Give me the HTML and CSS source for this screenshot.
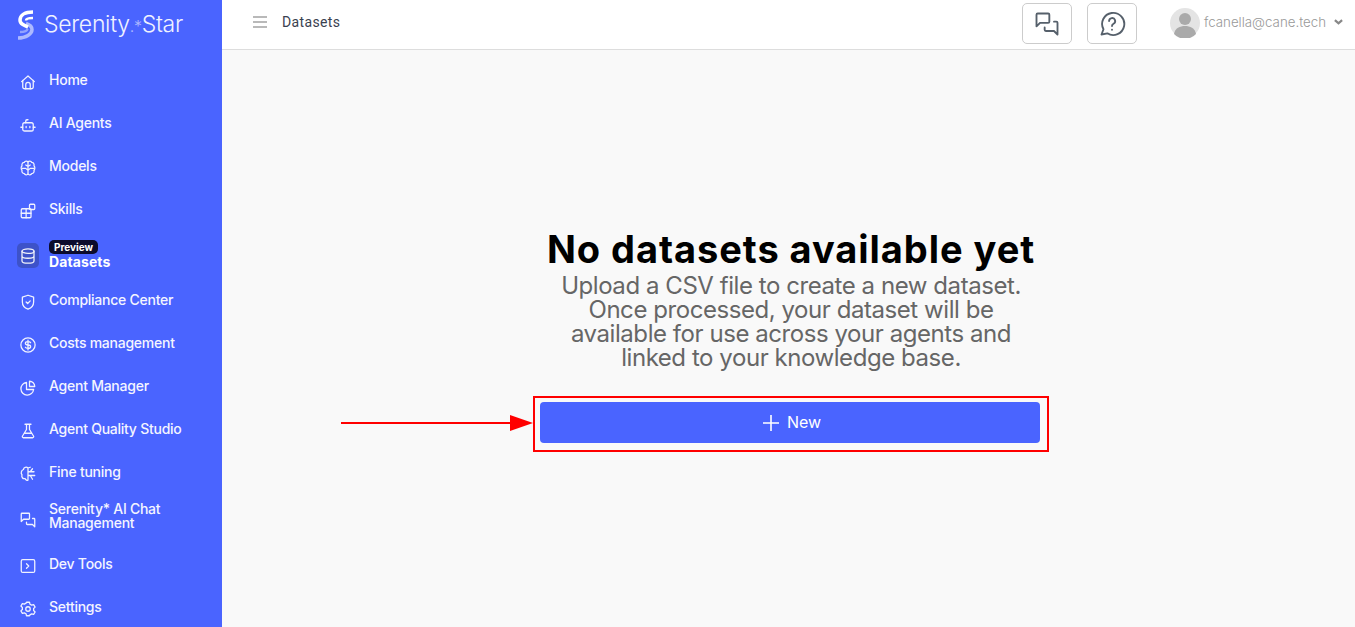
FILE: index.html
```html
<!DOCTYPE html>
<html lang="en">
<head>
<meta charset="utf-8">
<title>Datasets</title>
<link rel="stylesheet" href="styles.css">
</head>
<body>
<svg class="defs" width="0" height="0" aria-hidden="true">
  <symbol id="i-chat" viewBox="0 0 24 24"><path d="M21 14l-3-3h-7a1 1 0 0 1-1-1V4a1 1 0 0 1 1-1h9a1 1 0 0 1 1 1v10" transform="matrix(-1 0 0 1 24 0)"/><path d="M14 15v2a1 1 0 0 1-1 1H6l-3 3V11a1 1 0 0 1 1-1h2" transform="matrix(-1 0 0 1 24 0)"/></symbol>
</svg>
<div class="app">
  <aside class="sidebar">
    <div class="logo">
      <svg class="logo-mark" viewBox="0 0 16 30" width="16" height="30">
        <path class="mark-soft" d="M0 28C8 28 14 24 14 19.500c0-3.500-3-5-6-6"/>
        <path class="mark-soft2" d="M2 22c5 0 7-1 7.500-3"/>
        <path class="mark-main" d="M15 2C7 2 2 5 2 10c0 4 4 5.500 8 7"/>
        <path class="mark-main2" d="M15 8c-3 0-7 .5-7 2.500"/>
      </svg>
      <span class="logo-text">Serenity<span class="logo-dim">.*</span>Star</span>
    </div>
    <nav class="nav">
      <a class="nav-item"><svg class="ico" viewBox="0 0 24 24"><path d="M3.500 11.500L12 4l8.500 7.500"/><path d="M5 10v8.500A2.500 2.500 0 0 0 7.500 21h9a2.500 2.500 0 0 0 2.500-2.500V10"/><path d="M9 21v-5.500a3 3 0 0 1 6 0V21"/></svg><span class="nav-label">Home</span></a>
      <a class="nav-item"><svg class="ico" viewBox="0 0 24 24"><rect x="5" y="9" width="14" height="11" rx="2.500"/><path d="M9 9V6.500A1.500 1.500 0 0 1 10.500 5H12M2.500 15H5M19 15h2.500M9.500 14v1.500M14.500 14v1.500"/></svg><span class="nav-label">AI Agents</span></a>
      <a class="nav-item"><svg class="ico" viewBox="0 0 24 24"><path d="M12 4c-1-1.500-4-1.500-5 .5-2.500 0-3.500 2.500-3 4.500-1.500 1.500-1.500 4.500 0 6-.5 2 .5 4.500 3 4.500 1 2 4 2 5 .5 1 1.500 4 1.500 5-.5 2.500 0 3.500-2.500 3-4.500 1.500-1.500 1.500-4.500 0-6 .5-2-.5-4.500-3-4.500-1-2-4-2-5-.5z"/><path d="M12 4v16M12 10L9 8M12 15l-3-2.500H4M12 10l3-2M12 15l3-2.500h5"/></svg><span class="nav-label">Models</span></a>
      <a class="nav-item"><svg class="ico" viewBox="0 0 24 24"><rect x="3" y="9" width="13" height="12" rx="1.500"/><path d="M3 15h13M9.500 9v12"/><rect x="14" y="3" width="7" height="7" rx="1.200"/></svg><span class="nav-label">Skills</span></a>
      <a class="nav-item nav-item-active">
        <span class="ico-box"><svg class="ico ico-in" viewBox="0 0 24 24"><ellipse cx="12" cy="5.500" rx="8" ry="3"/><path d="M4 5.500v13c0 1.700 3.600 3 8 3s8-1.300 8-3v-13M4 12c0 1.700 3.600 3 8 3s8-1.300 8-3"/></svg></span>
        <span class="active-label"><span class="badge">Preview</span><span class="active-name">Datasets</span></span>
      </a>
      <a class="nav-item"><svg class="ico" viewBox="0 0 24 24"><path d="M12 3l7.500 2.500v6.500c0 5-3.200 8-7.500 9.500C7.700 20 4.500 17 4.500 12V5.500z"/><path d="M9.500 12l2 2 3.500-3.500"/></svg><span class="nav-label">Compliance Center</span></a>
      <a class="nav-item"><svg class="ico" viewBox="0 0 24 24"><circle cx="12" cy="12" r="9.500"/><path d="M15.500 9c-.5-1-1.700-1.500-3.500-1.500-2 0-3.500.8-3.500 2.300S10 12 12 12s3.500.7 3.500 2.200-1.500 2.300-3.500 2.300c-1.800 0-3-.5-3.500-1.500M12 5.500v13"/></svg><span class="nav-label">Costs management</span></a>
      <a class="nav-item"><svg class="ico" viewBox="0 0 24 24"><path d="M10 4.500a8.500 8.500 0 1 0 9.500 9.500H10z"/><path d="M14 3a7 7 0 0 1 7 7h-7z"/></svg><span class="nav-label">Agent Manager</span></a>
      <a class="nav-item"><svg class="ico" viewBox="0 0 24 24"><path d="M8 3h8M10 3v7L4.500 19a1.500 1.500 0 0 0 1.300 2h12.400a1.500 1.500 0 0 0 1.300-2L14 10V3M7.500 15h9"/></svg><span class="nav-label">Agent Quality Studio</span></a>
      <a class="nav-item"><svg class="ico" viewBox="0 0 24 24"><path d="M12 4c-2-2-6-1-6 2-3 1-4 5-2 7-1 3 1 6 4 5 1 2 3 3 4 2zM12 4l3-1M12 9h8M12 14h9M15 9l3-4M15 14l3 5"/></svg><span class="nav-label">Fine tuning</span></a>
      <a class="nav-item nav-item-tall"><svg class="ico" viewBox="0 0 24 24"><use href="#i-chat"/></svg><span class="nav-label nav-two">Serenity* AI Chat<br>Management</span></a>
      <a class="nav-item"><svg class="ico" viewBox="0 0 24 24"><rect x="3" y="3.500" width="18" height="17" rx="2"/><path d="M10 9l3 3-3 3"/></svg><span class="nav-label">Dev Tools</span></a>
      <a class="nav-item"><svg class="ico" viewBox="0 0 24 24"><path d="M10 3h4l.6 2.600 2.300 1.300 2.600-.8 2 3.400-2 1.900v2.600l2 1.900-2 3.400-2.600-.8-2.300 1.300L14 21h-4l-.6-2.600-2.300-1.300-2.600.8-2-3.400 2-1.900v-2.600l-2-1.900 2-3.400 2.600.8 2.300-1.300z"/><circle cx="12" cy="12" r="3"/></svg><span class="nav-label">Settings</span></a>
    </nav>
  </aside>
  <div class="main">
    <header class="topbar">
      <svg class="burger" viewBox="0 0 14 12" width="14" height="12"><path d="M0 1h14M0 6h14M0 11h14"/></svg>
      <span class="crumb">Datasets</span>
      <div class="top-right">
        <button class="top-btn"><svg class="top-ico" viewBox="0 0 24 24"><use href="#i-chat"/></svg></button>
        <button class="top-btn"><svg class="top-ico" viewBox="0 0 24 24"><path d="M3 21l1.700-4.500A9.500 9.500 0 1 1 8 20z"/><path d="M9.500 9.500a2.600 2.600 0 1 1 3.800 2.300c-.9.500-1.300 1-1.300 2M12 16.800v.2"/></svg></button>
        <div class="user">
          <svg class="avatar" viewBox="0 0 30 30" width="30" height="30"><circle cx="15" cy="15" r="15" fill="#e4e4e4"/><circle cx="15" cy="11" r="6" fill="#aaa"/><path d="M4 26c1-6 6-8 11-8s10 2 11 8a15 15 0 0 1-22 0z" fill="#aaa"/></svg>
          <span class="email">fcanella@cane.tech</span>
          <svg class="chev" viewBox="0 0 10 6" width="9" height="6"><path d="M1 1l4 3.500L9 1"/></svg>
        </div>
      </div>
    </header>
    <main class="content">
      <h1 class="title">No datasets available yet</h1>
      <p class="desc">Upload a CSV file to create a new dataset. Once processed, your dataset will be available for use across your agents and linked to your knowledge base.</p>
      <div class="highlight">
        <svg class="arrow" viewBox="0 0 192 16" width="192" height="16"><path class="arrow-line" d="M0 8h172"/><path class="arrow-head" d="M169 0l23 8-23 8z"/></svg>
        <button class="new-btn"><svg class="plus" viewBox="0 0 16 16" width="16" height="16"><path d="M8 0v16M0 8h16"/></svg><span class="new-label">New</span></button>
      </div>
    </main>
  </div>
</div>
</body>
</html>
```
FILE: styles.css
```css
* { box-sizing: border-box; }
html, body { margin: 0; height: 100%; overflow: hidden; }
body { font-family: "Inter", "Liberation Sans", sans-serif; background: #f9f9f9; }
.defs { position: absolute; }
.app { display: flex; height: 627px; }

.sidebar { width: 222px; flex: none; background: #4a64ff; color: #fff; overflow: hidden; }
.logo { height: 59px; padding: 10px 0 0 18px; display: flex; align-items: flex-start; gap: 10px; }
.logo-mark { flex: none; fill: none; stroke-width: 3.500; }
.mark-main { stroke: #fff; }
.mark-main2 { stroke: #fff; stroke-width: 2.500; }
.mark-soft { stroke: #fff; stroke-opacity: .55; }
.mark-soft2 { stroke: #fff; stroke-opacity: .4; stroke-width: 2.500; }
.logo-text { font-family: "Inter", sans-serif; font-weight: 300; font-size: 23px; line-height: 29px; letter-spacing: -.3px; color: #f0f2ff; white-space: nowrap; }
.logo-dim { opacity: .6; font-size: 16px; }

.nav { display: flex; flex-direction: column; }
.nav-item { height: 43px; display: flex; align-items: center; gap: 12px; padding-left: 19px; font-size: 14px; font-weight: 500; line-height: 14px; letter-spacing: -.25px; color: #f4f5ff; }
.nav-label { margin-top: -2px; }
.nav-item-tall { height: 49px; }
.nav-two { margin-top: -5px; }
.nav-item-active { height: 48px; padding-left: 17px; gap: 10px; align-items: flex-start; padding-top: 9px; letter-spacing: 0; }
.ico { width: 18px; height: 18px; margin-top: 3px; flex: none; fill: none; stroke: #fff; stroke-width: 1.700; stroke-linecap: round; stroke-linejoin: round; opacity: .92; }
.ico-in { margin-top: 0; }
.ico-box { width: 22px; height: 25px; margin-top: 3px; border-radius: 5px; background: #3d52c9; display: flex; align-items: center; justify-content: center; flex: none; }
.active-label { display: flex; flex-direction: column; align-items: flex-start; }
.badge { background: #0b0b2c; color: #fff; font-size: 10px; font-weight: 700; line-height: 14px; height: 14px; padding: 0 5px; border-radius: 5px; }
.active-name { font-weight: 700; color: #fff; margin-top: 1px; letter-spacing: .1px; }

.main { flex: 1; min-width: 0; display: flex; flex-direction: column; }
.topbar { height: 50px; flex: none; background: #fff; border-bottom: 1px solid #ddd; display: flex; align-items: center; padding: 0 12px 5px 31px; }
.burger { fill: none; stroke: #a3a3a3; stroke-width: 1.500; flex: none; }
.crumb { margin-left: 15px; font-size: 14px; letter-spacing: .35px; color: #3a4150; font-family: "Roboto", sans-serif; }
.top-right { margin-left: auto; display: flex; align-items: center; gap: 15px; padding-top: 3px; }
.top-btn { width: 50px; height: 41px; background: #fff; border: 1px solid #ccc; border-radius: 5px; padding: 0; display: flex; align-items: center; justify-content: center; }
.top-ico { width: 28px; height: 28px; fill: none; stroke: #56606b; stroke-width: 1.600; stroke-linecap: round; stroke-linejoin: round; }
.user { margin: -2px 0 0 18px; display: flex; align-items: center; }
.avatar { flex: none; }
.email { margin: -2px 0 0 4px; font-size: 13.300px; color: #999; font-weight: 300; }
.chev { margin: -2px 0 0 8px; fill: none; stroke: #888; stroke-width: 2.500; }

.content { flex: 1; display: flex; flex-direction: column; align-items: center; padding: 179px 0 0 5px; }
.title { margin: 0 0 5px; font-size: 38px; line-height: 40px; font-weight: 700; letter-spacing: .95px; color: #000; white-space: nowrap; }
.desc { margin: 0; width: 490px; text-align: center; font-size: 24px; line-height: 24px; font-weight: 400; letter-spacing: -.44px; color: #666; font-family: "Inter", sans-serif; }
.highlight { position: relative; margin-top: 26px; padding: 4px 5px; border: 2px solid #f00; width: 516px; height: 56px; }
.new-btn { width: 500px; height: 41px; padding: 0 0 0 4px; background: #4a64ff; color: #fff; border: 0; border-radius: 4px; font: 400 16px "Inter", sans-serif; display: flex; align-items: center; justify-content: center; gap: 8px; }
.new-label { margin-top: -2px; }
.plus { fill: none; stroke: #fff; stroke-width: 1.600; }
.arrow { position: absolute; left: -194px; top: 17px; }
.arrow-line { stroke: #f00; stroke-width: 2; fill: none; }
.arrow-head { fill: #f00; }
```
